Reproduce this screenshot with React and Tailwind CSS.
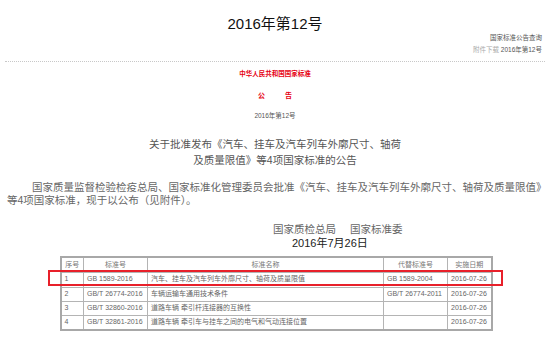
import React from "react";

const rows = [
  { no: "1", code: "GB 1589-2016", name: "汽车、挂车及汽车列车外廓尺寸、轴荷及质量限值", old: "GB 1589-2004", date: "2016-07-26", h: "h-[15px]" },
  { no: "2", code: "GB/T 26774-2016", name: "车辆运输车通用技术条件", old: "GB/T 26774-2011", date: "2016-07-26", h: "h-[14px]" },
  { no: "3", code: "GB/T 32860-2016", name: "道路车辆 牵引杆连接器的互换性", old: "", date: "2016-07-26", h: "h-[14px]" },
  { no: "4", code: "GB/T 32861-2016", name: "道路车辆 牵引车与挂车之间的电气和气动连接位置", old: "", date: "2016-07-26", h: "h-[15px]" },
];

const App = () => {
  return (
    <div className="w-[550px] h-[338px] overflow-hidden bg-white font-['Liberation_Sans','Noto_Sans_CJK_SC',sans-serif]">
      {/* Page title */}
      <div className="mt-[14px] text-center text-[15px] leading-[20px] text-[#111]">2016年第12号</div>

      {/* Right links */}
      <div className="-mt-[2px] pr-[8px] text-right text-[6.5px] leading-[12px]">
        <div className="text-[#555]">国家标准公告查询</div>
        <div>
          <span className="text-[#aaa]">附件下载 </span>
          <span className="text-[#555]">2016年第12号</span>
        </div>
      </div>

      <div className="mx-[5px] mt-[5px] border-t border-dotted border-[#c8c8c8]"></div>

      {/* Red heading */}
      <div className="mt-[5px] text-center text-[6.5px] leading-[14px] font-bold text-[#e60012]">中华人民共和国国家标准</div>
      <div className="mt-[8px] flex justify-center gap-[20px] text-[7px] leading-[14px] font-bold text-[#e60012]">
        <span>公</span>
        <span>告</span>
      </div>
      <div className="mt-[6px] text-center text-[6.5px] leading-[14px] text-[#555]">2016年第12号</div>

      {/* Notice title */}
      <div className="mt-[13px] text-center text-[10.5px] leading-[16px] text-[#555]">
        关于批准发布《汽车、挂车及汽车列车外廓尺寸、轴荷
        <br />
        及质量限值》等4项国家标准的公告
      </div>

      {/* Body */}
      <div className="mt-[13px] pl-[7px] whitespace-nowrap text-[10.5px] leading-[13px] text-[#666]">
        <div className="pl-[25px]">国家质量监督检验检疫总局、国家标准化管理委员会批准《汽车、挂车及汽车列车外廓尺寸、轴荷及质量限值》</div>
        <div>等4项国家标准，现于以公布（见附件）。</div>
      </div>

      {/* Signature */}
      <div className="mt-[15px] pl-[273px] flex gap-[14px] text-[10.5px] leading-[14px] text-[#666]">
        <span>国家质检总局</span>
        <span>国家标准委</span>
      </div>
      <div className="pl-[292px] text-[11px] leading-[14px] text-[#222]">2016年7月26日</div>

      {/* Standards table */}
      <div className="relative mx-auto mt-[6px] w-[431px]">
        <table className="w-full table-fixed border-collapse border-2 border-[#a8a8a8] text-[7px] text-[#666]">
          <colgroup>
            <col className="w-[23px]" />
            <col className="w-[64px]" />
            <col className="w-[236px]" />
            <col className="w-[64px]" />
            <col className="w-[44px]" />
          </colgroup>
          <thead>
            <tr className="h-[15px]">
              {["序号", "标准号", "标准名称", "代替标准号", "实施日期"].map((t) => (
                <th key={t} className="border border-[#b4b4b4] p-0 text-center font-normal text-[#777]">
                  {t}
                </th>
              ))}
            </tr>
          </thead>
          <tbody>
            {rows.map((r) => (
              <tr key={r.no} className={r.h}>
                <td className="border border-[#b4b4b4] px-[3px] py-0 whitespace-nowrap">{r.no}</td>
                <td className="border border-[#b4b4b4] px-[3px] py-0 whitespace-nowrap">{r.code}</td>
                <td className="border border-[#b4b4b4] px-[3px] py-0 whitespace-nowrap">{r.name}</td>
                <td className="border border-[#b4b4b4] px-[3px] py-0 whitespace-nowrap">{r.old}</td>
                <td className="border border-[#b4b4b4] px-[3px] py-0 whitespace-nowrap">{r.date}</td>
              </tr>
            ))}
          </tbody>
        </table>
        {/* highlight box around first row */}
        <div className="absolute left-[-12px] top-[14px] h-[16px] w-[455px] border-2 border-[#e8202a]"></div>
      </div>
    </div>
  );
};

export default App;
